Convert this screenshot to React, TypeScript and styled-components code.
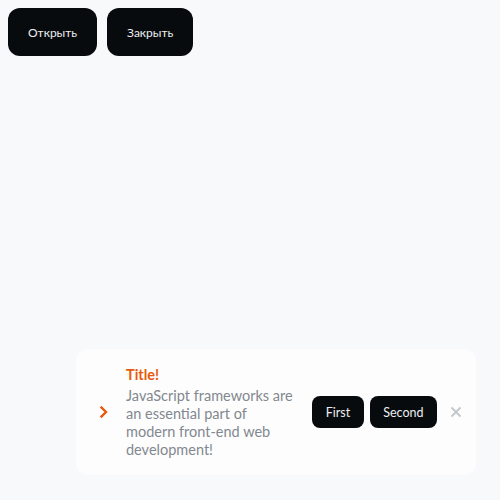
import styled, { createGlobalStyle } from "styled-components";

const Global = createGlobalStyle`
    body {
        margin: 0;
        background-color: #f8f9fb;
        font-family: Lato, "Noto Sans", sans-serif;
    }
`;

const Page = styled.div`
    min-height: 500px;
    padding: 8px;
    box-sizing: border-box;
`;

const Controls = styled.div`
    display: flex;
    gap: 10px;
`;

const Button = styled.button<{ $small?: boolean }>`
    height: ${(p) => (p.$small ? "32px" : "48px")};
    padding: ${(p) => (p.$small ? "0 13.5px" : "0 20px")};
    border: none;
    border-radius: ${(p) => (p.$small ? "8px" : "12px")};
    background-color: #080b0e;
    color: #eceef1;
    font-family: inherit;
    font-size: ${(p) => (p.$small ? "12.5px" : "12px")};
    cursor: pointer;
`;

const Toast = styled.div`
    position: fixed;
    right: 24px;
    bottom: 25px;
    width: 400px;
    box-sizing: border-box;
    display: flex;
    align-items: center;
    gap: 14px;
    padding: 16px 13px 16px 20px;
    background-color: #fdfdfe;
    border-radius: 12px;
`;

const Icon = styled.div`
    width: 16px;
    display: flex;
    justify-content: center;
    color: #e8590c;
`;

const Content = styled.div`
    flex: 1;
    display: flex;
    flex-direction: column;
    gap: 3px;
`;

const Title = styled.div`
    font-size: 14.5px;
    line-height: 19px;
    font-weight: 700;
    color: #e8590c;
`;

const Text = styled.div`
    font-size: 14.5px;
    line-height: 18px;
    color: #82888e;
`;

const Actions = styled.div`
    display: flex;
    gap: 6px;
    margin-right: -2px;
`;

const Close = styled.button`
    width: 14px;
    padding: 0;
    border: none;
    background: none;
    display: flex;
    justify-content: center;
    color: #c4c8cc;
    cursor: pointer;
`;

function App() {
    return (
        <Page>
            <Global />
            <Controls>
                <Button>Открыть</Button>
                <Button>Закрыть</Button>
            </Controls>
            <Toast>
                <Icon>
                    <svg width="10" height="12" viewBox="0 0 10 12" fill="none">
                        <path d="M2.5 1.5 L7 6 L2.5 10.5" stroke="currentColor" strokeWidth="2.4" strokeLinecap="square" />
                    </svg>
                </Icon>
                <Content>
                    <Title>Title!</Title>
                    <Text>JavaScript frameworks are an essential part of modern front-end web development!</Text>
                </Content>
                <Actions>
                    <Button $small>First</Button>
                    <Button $small>Second</Button>
                </Actions>
                <Close>
                    <svg width="12" height="12" viewBox="0 0 12 12">
                        <path d="M1.5 1.5 L10.5 10.5 M10.5 1.5 L1.5 10.5" stroke="currentColor" strokeWidth="2" />
                    </svg>
                </Close>
            </Toast>
        </Page>
    );
}

export default App;
